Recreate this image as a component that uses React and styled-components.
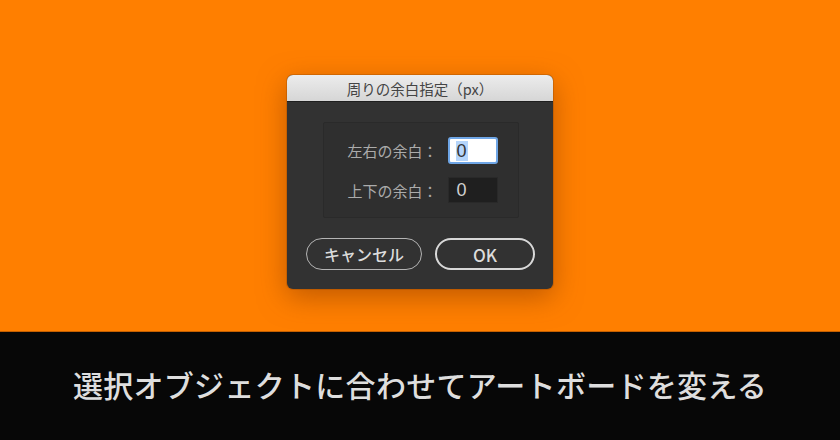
import styled, { createGlobalStyle } from "styled-components";

const GlobalStyle = createGlobalStyle`
  html, body {
    margin: 0;
    padding: 0;
  }
  body {
    width: 840px;
    height: 440px;
    overflow: hidden;
    background: #ff7f00;
    font-family: "Liberation Sans", "Noto Sans CJK JP", sans-serif;
  }
`;

function App() {
    return (
        <>
            <GlobalStyle />
            <Page>
                <Stage>
                    <Dialog>
                        <TitleBar>周りの余白指定（px）</TitleBar>
                        <DialogBody>
                            <GroupBox>
                                <FieldRow>
                                    <FieldLabel>左右の余白：</FieldLabel>
                                    <NumberBox focused>
                                        <Selected>0</Selected>
                                    </NumberBox>
                                </FieldRow>
                                <FieldRow>
                                    <FieldLabel>上下の余白：</FieldLabel>
                                    <NumberBox>0</NumberBox>
                                </FieldRow>
                            </GroupBox>
                            <ButtonRow>
                                <PillButton width={116}>キャンセル</PillButton>
                                <PillButton width={100} primary>OK</PillButton>
                            </ButtonRow>
                        </DialogBody>
                    </Dialog>
                </Stage>
                <Caption>
                    <CaptionText>選択オブジェクトに合わせてアートボードを変える</CaptionText>
                </Caption>
            </Page>
        </>
    )
}

const Page = styled.div`
display: flex;
flex-direction: column;
width: 840px;
height: 440px;
`
const Stage = styled.div`
height: 331px;
display: flex;
justify-content: center;
align-items: flex-start;
padding-top: 75px;
box-sizing: border-box;
background: #ff7f00;
`
const Dialog = styled.div`
width: 266px;
height: 214px;
border-radius: 6px;
overflow: hidden;
background: #323232;
box-shadow: 0 8px 28px rgba(140, 60, 0, 0.55), 0 0 0 1px rgba(120, 60, 0, 0.25);
`
const TitleBar = styled.div`
height: 27px;
display: flex;
align-items: center;
justify-content: center;
background: linear-gradient(#ececec, #d6d6d6);
border-bottom: 1px solid #1e1e1e;
box-sizing: border-box;
color: #444;
font-size: 14.5px;
font-family: "Noto Sans CJK JP", sans-serif;
`
const DialogBody = styled.div`
display: flex;
flex-direction: column;
align-items: center;
padding: 20px 18px 18px 19px;
gap: 20px;
`
const GroupBox = styled.div`
width: 196px;
box-sizing: border-box;
padding: 14px 20px;
display: flex;
flex-direction: column;
gap: 13px;
border: 1px solid #2a2a2a;
border-radius: 2px;
background: #2f2f2f;
`
const FieldRow = styled.div`
display: flex;
align-items: center;
justify-content: flex-end;
gap: 10px;
`
const FieldLabel = styled.span`
color: #ababab;
font-size: 15px;
white-space: nowrap;
font-family: "Noto Sans CJK JP", sans-serif;
`
const NumberBox = styled.div`
flex-shrink: 0;
width: 50px;
height: ${({ focused }) => (focused ? "27px" : "26px")};
box-sizing: border-box;
display: flex;
align-items: center;
padding-left: ${({ focused }) => (focused ? "6px" : "8px")};
font-size: 18px;
color: ${({ focused }) => (focused ? "#333" : "#d0d0d0")};
background: ${({ focused }) => (focused ? "#ffffff" : "#1f1f1f")};
border: ${({ focused }) => (focused ? "2px solid #6fa6e6" : "1px solid #292929")};
border-radius: ${({ focused }) => (focused ? "3px" : "1px")};
`
const Selected = styled.span`
background: #b5d5fb;
padding: 0 1px;
line-height: 20px;
`
const ButtonRow = styled.div`
display: flex;
gap: 13px;
align-self: stretch;
`
const PillButton = styled.div`
width: ${({ width }) => width}px;
height: 32px;
box-sizing: border-box;
display: flex;
align-items: center;
justify-content: center;
border-radius: 16px;
border: ${({ primary }) => (primary ? "2.5px solid #d8d8d8" : "1.5px solid #b4b4b4")};
color: #dcdcdc;
font-size: ${({ primary }) => (primary ? "17px" : "16px")};
font-weight: 500;
font-family: "Noto Sans CJK JP", sans-serif;
`
const Caption = styled.div`
flex: 1;
background: #070707;
display: flex;
align-items: center;
justify-content: center;
border-top: 1px solid #c45f00;
`
const CaptionText = styled.div`
color: #dedede;
font-size: 30px;
font-weight: 500;
letter-spacing: 0.3px;
font-family: "Noto Sans CJK JP", sans-serif;
padding-bottom: 4px;
`

export default App;
